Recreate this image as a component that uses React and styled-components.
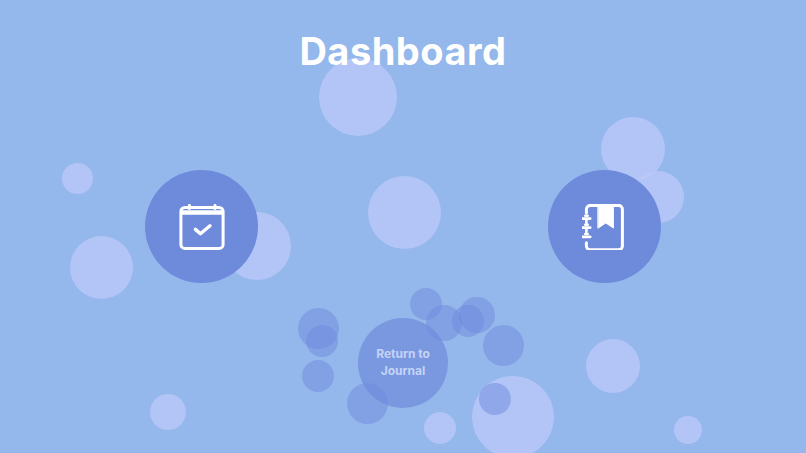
import React from "react";
import styled, { createGlobalStyle } from "styled-components";

const lightBubbles = [
  [358, 97, 39], [633, 149, 32], [658, 197, 26], [77.5, 178.5, 15.5],
  [101.5, 267, 31.5], [257, 246, 34], [404.5, 212.5, 36.5], [612.5, 366, 27],
  [168, 412, 18], [439.5, 428, 16], [513, 417, 41], [687.5, 430, 14],
];

const darkBubbles = [
  [318, 328, 20.5], [322, 341, 16], [318, 376, 16], [367.5, 403, 20.5],
  [426, 304, 16], [444, 323, 18], [467.5, 321, 16], [477, 315, 18],
  [503, 345, 20.5], [495, 399, 16],
];

const CalendarIcon = () => (
  <svg width="46" height="46" viewBox="0 0 46 46" fill="none" stroke="#fff" strokeWidth="3" strokeLinecap="round" strokeLinejoin="round">
    <rect x="1.9" y="3.4" width="42.2" height="41" rx="4" />
    <path d="M1.9 8.5h42.2" strokeWidth="4.4" strokeLinecap="butt" />
    <path d="M10.4 1.4v3M36 1.4v3" />
    <path d="M16.4 25.4l5 4.4 9.6-8" strokeWidth="3.4" />
  </svg>
);

const JournalIcon = () => (
  <svg width="45" height="46" viewBox="0 0 45 46" fill="none" stroke="#fff" strokeWidth="3" strokeLinecap="round" strokeLinejoin="round">
    <path d="M4.4 9V5.4a4 4 0 0 1 4-4h28.2a3.8 3.8 0 0 1 3.8 3.8v36.8a3.8 3.8 0 0 1-3.8 3.8H8.4a4 4 0 0 1-4-4v-3" />
    <path d="M4.4 16v3M4.4 25v3" strokeWidth="2.6" />
    <path d="M0.8 14.6h7.4M0.8 23.6h7.4M0.8 32.8h7.4" strokeWidth="2.8" />
    <path d="M3.2 11.8h2.6M3.2 20.8h2.6M3.2 30h2.6" strokeWidth="2.4" />
    <path d="M16.2 1.4h15.2v22.6l-7.6-5-7.6 5z" fill="#fff" stroke="#fff" strokeWidth="1" />
  </svg>
);

const App = () => (
  <>
    <GlobalStyle />
    <Page>
      {lightBubbles.map(([x, y, r]) => (
        <Bubble
          key={`l-${x}-${y}`}
          $tone="light"
          style={{ left: x - r, top: y - r, width: r * 2, height: r * 2 }}
        />
      ))}
      {darkBubbles.map(([x, y, r]) => (
        <Bubble
          key={`d-${x}-${y}`}
          $tone="dark"
          style={{ left: x - r, top: y - r, width: r * 2, height: r * 2 }}
        />
      ))}
      <Content>
        <Title>Dashboard</Title>
        <IconRow>
          <IconButton aria-label="Calendar">
            <CalendarIcon />
          </IconButton>
          <IconButton aria-label="Journal">
            <JournalIcon />
          </IconButton>
        </IconRow>
        <ReturnButton>Return to Journal</ReturnButton>
      </Content>
    </Page>
  </>
);

export default App;

const GlobalStyle = createGlobalStyle`
  html, body {
    margin: 0;
    padding: 0;
  }

  body {
    font-family: "Inter", "Open Sans", sans-serif;
  }
`;

const Page = styled.div`
  position: relative;
  width: 100%;
  height: 100vh;
  overflow: hidden;
  background-color: #94b8ec;
`;

const Bubble = styled.div`
  position: absolute;
  border-radius: 50%;
  background-color: ${props =>
    props.$tone === "light" ? "rgba(190, 200, 250, 0.75)" : "rgba(110, 138, 219, 0.5)"};
`;

const Content = styled.div`
  position: relative;
  display: flex;
  flex-direction: column;
  align-items: center;
  height: 100%;
  padding-top: 28px;
  box-sizing: border-box;
`;

const Title = styled.h1`
  margin: 0;
  height: 46px;
  font-size: 38px;
  line-height: 46px;
  font-weight: 700;
  letter-spacing: 0.5px;
  color: #fff;
`;

const IconRow = styled.div`
  display: flex;
  justify-content: space-between;
  width: 100%;
  margin-top: 96px;
  padding: 0 145px;
  box-sizing: border-box;
`;

const IconButton = styled.button`
  display: flex;
  align-items: center;
  justify-content: center;
  width: 113px;
  height: 113px;
  padding: 0;
  border: 0;
  border-radius: 50%;
  background-color: #6e8adb;
`;

const ReturnButton = styled.button`
  width: 90px;
  height: 90px;
  margin-top: 35px;
  padding: 0 6px 2px;
  border: 0;
  border-radius: 50%;
  background-color: rgba(110, 138, 219, 0.7);
  font-family: "Inter", "Open Sans", sans-serif;
  font-size: 12px;
  line-height: 17px;
  font-weight: 700;
  color: #c5d3f6;
`;
